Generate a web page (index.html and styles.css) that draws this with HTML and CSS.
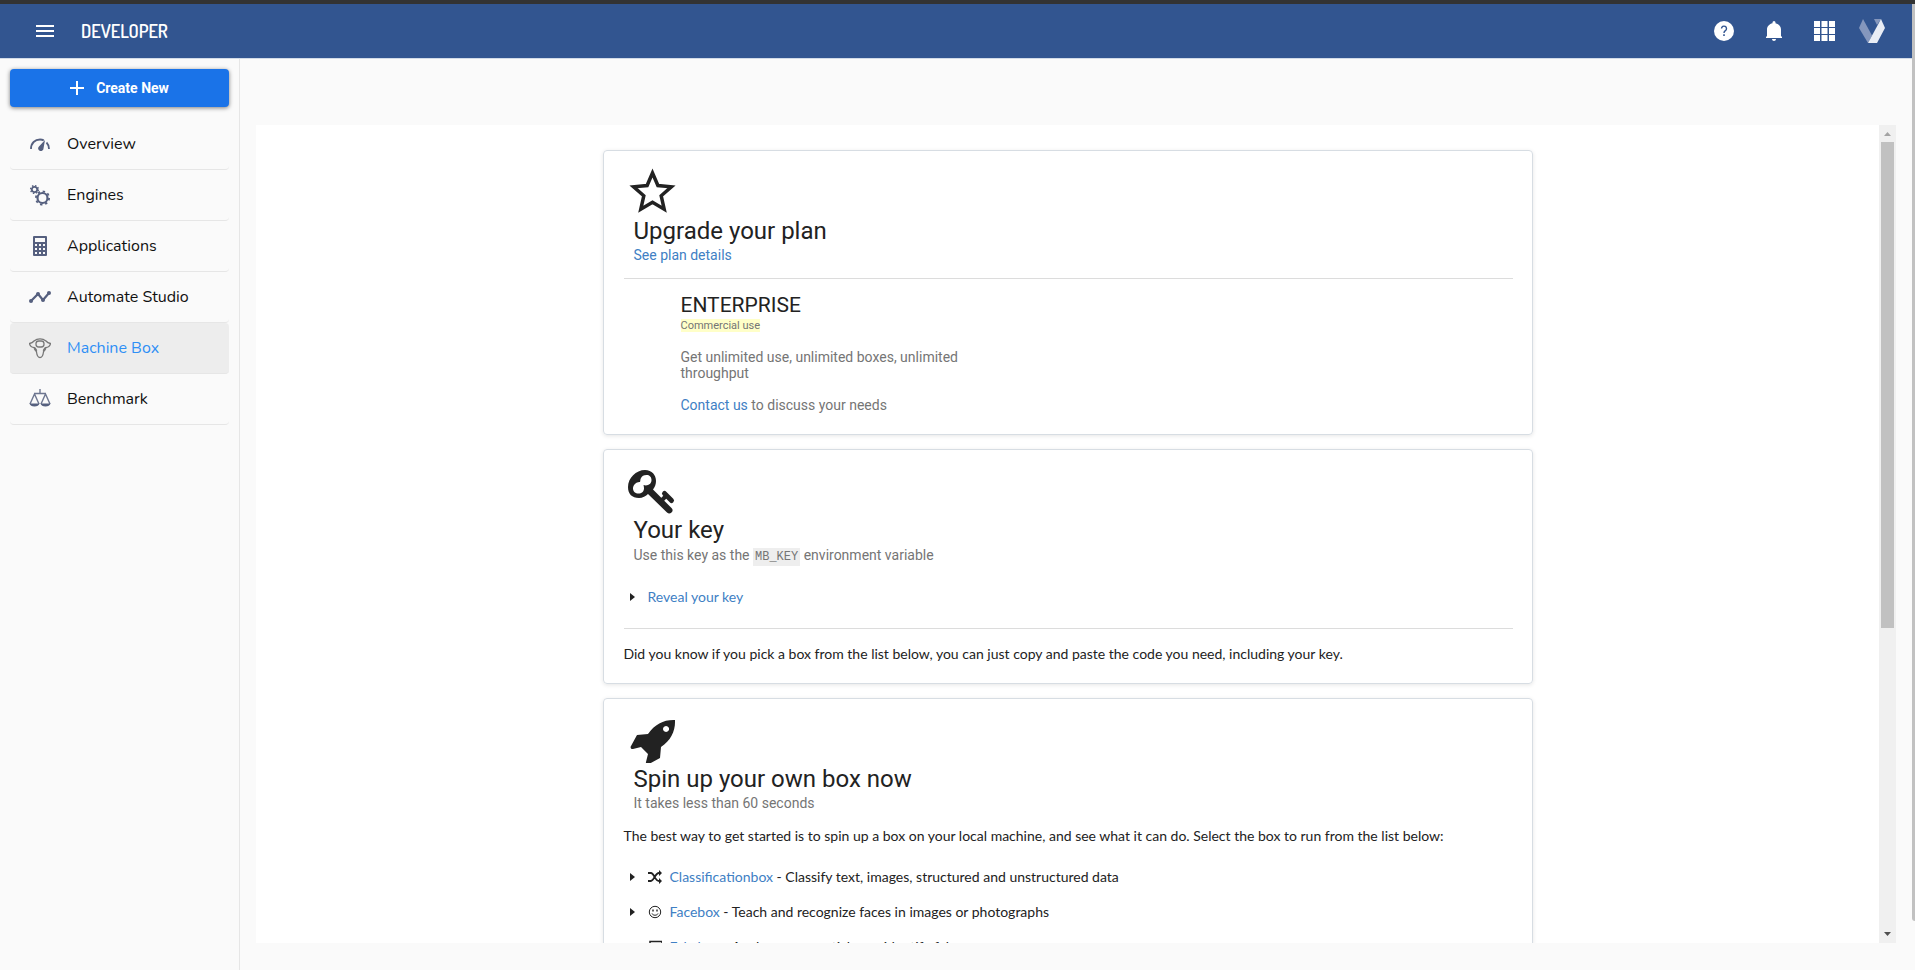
FILE: index.html
```html
<!DOCTYPE html>
<html lang="en">
<head>
<meta charset="utf-8">
<title>Developer - Machine Box</title>
<link rel="stylesheet" href="styles.css">
</head>
<body>
<header class="topbar">
  <button class="icon-button menu-button" aria-label="Menu">
    <svg width="18" height="12" viewBox="0 0 18 12" fill="#fff"><path d="M0 0h18v2H0zM0 5h18v2H0zM0 10h18v2H0z"/></svg>
  </button>
  <span class="brand">DEVELOPER</span>
  <nav class="top-actions" aria-label="Account">
    <button class="icon-button" aria-label="Help">
      <svg width="20" height="20" viewBox="0 0 20 20"><circle cx="10" cy="10" r="10" fill="#fff"/><path d="M7.500 7.600a2.500 2.500 0 1 1 3.900 2.100c-.9.600-1.400 1-1.400 2.300" fill="none" stroke="#325590" stroke-width="1.400"/><path d="M9.200 13.300h1.600V15H9.200z" fill="#325590"/></svg>
    </button>
    <button class="icon-button" aria-label="Notifications">
      <svg width="16" height="20" viewBox="0 0 16 20" fill="#fff"><path d="M8 20c1.100 0 2-.9 2-2H6c0 1.100.9 2 2 2zm7-5V8.500C15 5.500 12.500 3 9.500 2.300V1.500a1.500 1.500 0 0 0-3 0v.8C3.500 3 1 5.500 1 8.500V15l-1 1v1h16v-1z"/></svg>
    </button>
    <button class="icon-button" aria-label="Applications">
      <svg width="21" height="20" viewBox="0 0 21 20" fill="#fff"><path d="M0 0h6v6H0zM7.500 0h6v6h-6zM15 0h6v6h-6zM0 7h6v6H0zM7.500 7h6v6h-6zM15 7h6v6h-6zM0 14h6v6H0zM7.500 14h6v6h-6zM15 14h6v6h-6z"/></svg>
    </button>
    <button class="icon-button" aria-label="Profile">
      <svg width="26" height="24" viewBox="0 0 26 24"><path d="M4 0 0 9l9 15 4-7.500z" fill="#8597bd"/><path d="M15 0h7l-4 6z" fill="#8597bd"/><path d="m22 0 4 9-8 15H9z" fill="#e9edf5"/></svg>
    </button>
  </nav>
</header>

<div class="shell">
  <aside class="sidebar">
    <button class="create-button">
      <svg width="14" height="14" viewBox="0 0 14 14" fill="#fff"><path d="M6 0h2v6h6v2H8v6H6V8H0V6h6z"/></svg>
      Create New
    </button>
    <nav class="side-nav" aria-label="Main">
      <a class="nav-item" href="#">
        <svg class="nav-icon" viewBox="0 0 22 22" fill="none" stroke="#56607f"><path d="M2 16c0-6 4-9.500 9-9.500 1.500 0 2.700.3 3.800.9M17.500 9.500c1.700 1.700 2.500 3.500 2.500 6.500" stroke-width="1.800"/><path d="m16 7-1.500 8.500a2.700 2.700 0 1 1-5-1.500z" fill="#56607f" stroke="none"/></svg>
        Overview</a>
      <a class="nav-item" href="#">
        <svg class="nav-icon" viewBox="0 0 22 22" fill="none" stroke="#56607f"><circle cx="5.500" cy="5.500" r="2.700" stroke-width="1.800"/><circle cx="5.500" cy="5.500" r="3.900" stroke-width="1.400" stroke-dasharray="1.500 1.560"/><circle cx="13.500" cy="14" r="5" stroke-width="2.200"/><circle cx="13.500" cy="14" r="6.600" stroke-width="1.800" stroke-dasharray="2.400 2.780"/></svg>
        Engines</a>
      <a class="nav-item" href="#">
        <svg class="nav-icon" viewBox="0 0 22 22"><path fill="#56607f" fill-rule="evenodd" d="M5 1h12a1 1 0 0 1 1 1v18a1 1 0 0 1-1 1H5a1 1 0 0 1-1-1V2a1 1 0 0 1 1-1zm1 2v4h10V3zm0 6v2h2V9zm4 0v2h2V9zm4 0v2h2V9zm-8 4v2h2v-2zm4 0v2h2v-2zm4 0v2h2v-2zm-8 4v2h2v-2zm4 0v2h2v-2zm4 0v2h2v-2z"/></svg>
        Applications</a>
      <a class="nav-item" href="#">
        <svg class="nav-icon" viewBox="0 0 22 22" fill="#56607f"><path d="m2 15 7-7 5 6 6-7" fill="none" stroke="#56607f" stroke-width="2.200"/><circle cx="2" cy="15" r="2"/><circle cx="9" cy="8" r="2"/><circle cx="14" cy="14" r="2"/><circle cx="20" cy="7" r="2"/></svg>
        Automate Studio</a>
      <a class="nav-item active" href="#" aria-current="page">
        <svg class="nav-icon" viewBox="0 0 22 22" fill="none" stroke="#777" stroke-width="1.300"><path d="M.5 6.500c2-.3 3.500-1.200 4.500-2.500 3.500-2.800 8.500-2.800 12 0 1 1.300 2.500 2.200 4.500 2.500-.3 2-2.800 3.800-5 4.200-1.500 1-1.500 2.300-2 4.300-.4 3-1.300 5.500-3.500 5.500S7.900 18 7.500 15c-.5-2-.5-3.300-2-4.300C3.300 10.300.8 8.500.5 6.500z"/><rect x="7" y="4" width="8" height="6" rx="2.800"/><path d="m5.500 11 1.800 3M16.500 11l-1.800 3" stroke-width="2.400"/></svg>
        Machine Box</a>
      <a class="nav-item" href="#">
        <svg class="nav-icon" viewBox="0 0 22 22" fill="none" stroke="#6d7690" stroke-width="1.400"><path d="M11 1v4M5 5.500h12M5.500 6 1 16M5.500 6 10 16M16.500 6 12 16M16.500 6 21 16"/><path d="M.5 15.500h10c-.5 2-2.300 3-5 3s-4.500-1-5-3zM11.500 15.500h10c-.5 2-2.300 3-5 3s-4.500-1-5-3z" fill="#56607f" stroke="none"/></svg>
        Benchmark</a>
    </nav>
  </aside>

  <main class="content">
    <div class="frame">
      <div class="cards">
        <section class="card">
          <svg class="card-icon" viewBox="0 0 48 48" fill="none" stroke="#222" stroke-width="3.500"><path d="m24.500 6 5.400 12.500 13.500 1.300-10.200 9 3 13.400-11.700-6.900-11.700 6.900 3-13.400-10.200-9 13.500-1.300z"/></svg>
          <div class="card-head">
            <h2>Upgrade your plan</h2>
            <p><a href="#">See plan details</a></p>
          </div>
          <hr>
          <div class="plan">
            <h3>ENTERPRISE</h3>
            <p class="tag-line"><mark>Commercial use</mark></p>
            <p>Get unlimited use, unlimited boxes, unlimited throughput</p>
            <p><a href="#">Contact us</a> to discuss your needs</p>
          </div>
        </section>

        <section class="card">
          <svg class="card-icon" viewBox="0 0 48 48"><path fill="#222" fill-rule="evenodd" d="M0 21C0 12 8 4 17 4c7 0 11 5 11 11 0 3-1 6-3 8.500L43.500 42a3 3 0 0 1-4.500 4.500L20 28c-2 2-5.500 4-9 4C4 32 0 28 0 21zM13 12c-1 2-.5 3-1 4-3-.5-7 2.500-7 6.500 0 3 2.500 5 5.500 5s5.500-2 5.500-5c0-1.500-.3-2.500-.5-3.500 4 1.500 8-1 8-5 0-3-2-5-5-5s-4.500 1-5.500 3z"/><path fill="none" stroke="#222" stroke-width="4" d="m32 36 7-7"/><path fill="none" stroke="#222" stroke-width="5" stroke-linecap="round" d="m36.500 27.500 7 7"/></svg>
          <div class="card-head">
            <h2>Your key</h2>
            <p class="with-code">Use this key as the <code>MB_KEY</code> environment variable</p>
          </div>
          <details class="entry key-entry"><summary><a href="#">Reveal your key</a></summary></details>
          <hr>
          <p class="note">Did you know if you pick a box from the list below, you can just copy and paste the code you need, including your key.</p>
        </section>

        <section class="card">
          <svg class="card-icon" viewBox="0 0 48 48"><path transform="translate(0 2)" fill="#222" fill-rule="evenodd" d="M47 3c.5 11-4 20-14 27l-1 11-11 6c-2 1-3.500-.5-3-2l2-8-7-7-8 2c-2 .5-3-1.500-2-3l6-11 11-1C27 7 36 2.500 47 3zM38 9a3 3 0 1 0 .1 0z"/></svg>
          <div class="card-head">
            <h2>Spin up your own box now</h2>
            <p>It takes less than 60 seconds</p>
          </div>
          <p class="note intro">The best way to get started is to spin up a box on your local machine, and see what it can do. Select the box to run from the list below:</p>
          <details class="entry"><summary>
            <svg class="entry-icon" viewBox="0 0 14 14" fill="none" stroke="#222" stroke-width="1.800"><path d="M0 3h3c3 0 4 8 8 8h1M0 11h3c3 0 4-8 8-8h1"/><path d="m11 0 3 3-3 3zM11 8l3 3-3 3z" fill="#222" stroke="none"/></svg>
            <span><a href="#">Classificationbox</a> - Classify text, images, structured and unstructured data</span></summary></details>
          <details class="entry"><summary>
            <svg class="entry-icon" viewBox="0 0 14 14" fill="none" stroke="#222"><circle cx="7" cy="7" r="5.700"/><path d="M4 8.500c1 2.300 5 2.300 6 0"/><path d="M5 4.500v2M9 4.500v2" stroke-width="1.400"/></svg>
            <span><a href="#">Facebox</a> - Teach and recognize faces in images or photographs</span></summary></details>
          <details class="entry"><summary>
            <svg class="entry-icon" viewBox="0 0 14 14" fill="none" stroke="#222" stroke-width="1.500"><path d="M2 1.500h12v11H1V4h1z"/></svg>
            <span><a href="#">Fakebox</a> - Analyze news articles to identify fake news</span></summary></details>
        </section>
      </div>
      <div class="scrollbar" aria-hidden="true">
        <svg width="17" height="17" viewBox="0 0 17 17"><path d="m5 11 3.500-4 3.500 4z" fill="#a3a3a3"/></svg>
        <div class="scroll-track"><div class="scroll-thumb"></div></div>
        <svg width="17" height="17" viewBox="0 0 17 17"><path d="m5 6 3.500 4L12 6z" fill="#505050"/></svg>
      </div>
    </div>
  </main>
</div>
<div class="page-scroll" aria-hidden="true"></div>
</body>
</html>
```
FILE: styles.css
```css
* { box-sizing: border-box; }

body {
  margin: 0;
  height: 100vh;
  display: flex;
  flex-direction: column;
  overflow: hidden;
  background: #fafafa;
  color: #222;
  font-family: Roboto, sans-serif;
  font-size: 14px;
}

h2, h3, p { margin: 0; font-weight: 400; }
a { color: #4080cc; text-decoration: none; }
svg { display: block; flex: none; }

.topbar {
  flex: none;
  height: 59px;
  display: flex;
  align-items: center;
  padding: 0 30px 0 36px;
  background: #325590;
  border-top: 4px solid #333;
  border-bottom: 1px solid #d2dbe8;
}
.icon-button { padding: 0; border: 0; background: none; cursor: pointer; }
.brand {
  margin-left: 27px;
  color: #fff;
  font: 600 18px Dosis, "Roboto Condensed", "Liberation Sans Narrow", Roboto, sans-serif;
}
.top-actions { display: flex; align-items: center; gap: 32px; margin-left: auto; }
.top-actions .icon-button:last-child { margin-left: -8px; }

.shell { flex: 1; min-height: 0; display: flex; }

.sidebar {
  flex: none;
  width: 240px;
  padding: 10px 10px 0;
  border-right: 1px solid #e6e6e6;
}
.create-button {
  width: 100%;
  height: 38px;
  display: flex;
  align-items: center;
  justify-content: center;
  gap: 12px;
  border: 0;
  border-radius: 4px;
  background: #1a73e8;
  color: #fff;
  font: 700 14px Roboto, sans-serif;
  box-shadow: 0 1px 4px rgba(0, 0, 0, .5);
}
.side-nav { margin-top: 12px; }
.nav-item {
  height: 51px;
  display: flex;
  align-items: center;
  gap: 16px;
  padding-left: 19px;
  border-bottom: 1px solid #e6e6e6;
  border-radius: 4px;
  color: #111;
  font: 400 16px Nunito, "Open Sans", sans-serif;
}
.nav-item.active { background: #ededed; color: #2f8ff5; }
.nav-icon { width: 22px; height: 22px; }

.content { flex: 1; min-width: 0; padding: 66px 19px 27px 16px; }
.frame { height: 100%; display: flex; background: #fff; }
.cards { flex: 1; min-width: 0; overflow: hidden; padding: 25px 16px 0; }

.card {
  max-width: 930px;
  margin: 0 auto 14px;
  padding: 16px 19px 19px 20px;
  border: 1px solid #d7dde3;
  border-radius: 4px;
  box-shadow: 0 1px 4px rgba(0, 0, 0, .1);
}
.card-icon { width: 48px; height: 48px; margin-left: 4px; }
.card-head { padding-left: 10px; color: #757575; }
.card h2 { color: #222; font-size: 24px; line-height: 32px; }
.card-head p { line-height: 16px; }
.card-head .with-code { line-height: 18px; }
.card a { color: #4080c4; }
code {
  padding: 2px;
  background: #eee;
  font: 12px "Liberation Mono", monospace;
}
hr { height: 1px; margin: 15px 0 13px; border: 0; background: #dcdcdc; }

.plan { width: 350px; padding: 0 0 2px 57px; color: #757575; line-height: 16px; }
.plan h3 { color: #222; font-size: 21px; line-height: 26px; }
.plan p + p { margin-top: 16px; }
.plan .tag-line { font-size: 11px; }
.plan .tag-line + p { margin-top: 15px; }
mark { background: #ffffc8; color: inherit; }

.note, .entry { font-family: Lato, sans-serif; line-height: 20px; }
.note { padding-top: 2px; }
.intro { margin: 13px 0 21px; }
.entry { margin-bottom: 15px; }
.entry summary { display: flex; align-items: center; gap: 8px; padding-left: 6px; list-style: none; cursor: pointer; }
.entry summary::before {
  content: "";
  width: 0;
  margin-right: 5px;
  border: solid transparent;
  border-width: 4px 0 4px 5px;
  border-left-color: #222;
}
.entry-icon { width: 14px; height: 14px; }
.key-entry { margin: 23px 0 21px; }

.scrollbar { flex: none; width: 17px; display: flex; flex-direction: column; background: #f0f0f0; }
.scroll-track { flex: 1; padding: 0 2px; }
.scroll-thumb { height: 62%; background: #c1c1c1; }

.page-scroll {
  position: absolute;
  top: 4px;
  right: 0;
  bottom: 49px;
  width: 3px;
  border-radius: 0 0 0 3px;
  background: #c1c1c1;
}
```
